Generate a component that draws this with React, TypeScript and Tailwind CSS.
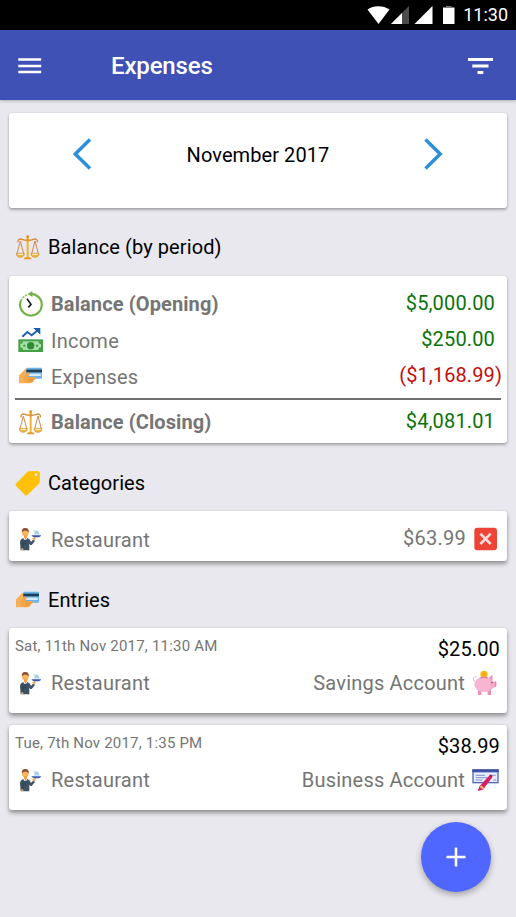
import type { ReactNode } from 'react';

function ScalesIcon() {
  return (
    <svg viewBox="0 0 78 78" className="h-[26px] w-[26px] shrink-0" fill="none">
      <path d="M16 21L6 59M16 21L26 59M60 21L50 59M60 21L70 59" stroke="#cf8a4e" strokeWidth="3" />
      <path d="M9 25C7 17 14 13 21 16C29 20 47 20 55 16C62 13 69 17 67 25" stroke="#d58a35" strokeWidth="4" />
      <path d="M4 58H28C28 66 23 70 16 70S4 66 4 58Z" fill="#f4b63c" stroke="#cf8a2e" strokeWidth="2" />
      <path d="M48 58H72C72 66 67 70 60 70S48 66 48 58Z" fill="#f4b63c" stroke="#cf8a2e" strokeWidth="2" />
      <path d="M8 61H24M52 61H68" stroke="#fff0c8" strokeWidth="4" />
      <path d="M38 8V72" stroke="#f6b22c" strokeWidth="6" />
      <circle cx="38" cy="8" r="4" fill="#dd8d1c" />
      <circle cx="38" cy="18" r="4.5" fill="#e2941f" />
      <path d="M27 74C27 70 32 70 38 70S49 70 49 74V76H27Z" fill="#e59a20" />
    </svg>
  );
}

function HistoryIcon() {
  return (
    <svg viewBox="0 0 78 78" className="h-[26px] w-[26px] shrink-0" fill="none">
      <path d="M34 9A32.500 32.500 0 1 1 9 28" stroke="#70b244" strokeWidth="6.500" />
      <path d="M9 30A32 32 0 0 1 27 11" stroke="#8cc665" strokeWidth="5" strokeDasharray="7 3" />
      <path d="M43 0L29 9L43 18Z" fill="#70b244" />
      <path d="M27 23L39 40L31 49" stroke="#1c1c1c" strokeWidth="5" />
    </svg>
  );
}

function IncomeIcon() {
  return (
    <svg viewBox="0 0 78 78" className="h-[26px] w-[26px] shrink-0" fill="none">
      <path d="M13 29L28 15L41 25L61 8" stroke="#2163ad" strokeWidth="6" />
      <path d="M46 3H67V23Z" fill="#1c5ba5" />
      <rect x="1" y="37" width="74" height="38" fill="#43a047" />
      <rect x="7" y="43" width="62" height="26" fill="#a5e0a4" />
      <path d="M7 43H15A8 8 0 0 1 7 51ZM69 43H61A8 8 0 0 0 69 51ZM7 69H15A8 8 0 0 0 7 61ZM69 69H61A8 8 0 0 1 69 61Z" fill="#43a047" />
      <circle cx="38" cy="56" r="11" fill="#2e8b3c" />
      <circle cx="19" cy="56" r="3.5" fill="#43a047" />
      <circle cx="57" cy="56" r="3.5" fill="#43a047" />
    </svg>
  );
}

function PaymentIcon() {
  return (
    <svg viewBox="0 0 78 78" className="h-[26px] w-[26px] shrink-0">
      <path d="M3 37L21 19C24 16 29 17 32 20L44 30L49 44L45 57L39 61H3Z" fill="#f6b158" />
      <rect x="25" y="14" width="47" height="33" rx="3" fill="#6db2e8" />
      <rect x="25" y="20" width="47" height="8" fill="#1f3d55" />
      <rect x="31" y="32" width="37" height="7" fill="#d7edfc" />
      <path d="M18 39L30 28L36 33L29 42H47C55 42 56 48 49 50L45 51C49 53 47 58 42 57L37 55C36 60 30 62 26 59L16 57Z" fill="#f3a548" />
      <path d="M32 48H50M30 54H44" stroke="#da8b36" strokeWidth="2" />
    </svg>
  );
}

function TagIcon() {
  return (
    <svg viewBox="0 0 78 78" className="h-[26px] w-[26px] shrink-0">
      <path
        d="M43 4L67 3C72 3 75 6 75 11L74 35C74 38 73 40 71 42L38 74C35 77 32 77 29 74L4 49C1 46 1 43 4 40L36 7C38 5 40 4 43 4ZM63 10A4 4 0 1 0 63 18A4 4 0 1 0 63 10Z"
        fill="#ffc107"
        fillRule="evenodd"
      />
    </svg>
  );
}

function WaiterIcon() {
  return (
    <svg viewBox="0 0 78 78" className="h-[26px] w-[26px] shrink-0">
      <path d="M6 49C6 42 10 38 17 36H28C34 38 37 43 39 48L46 40L51 45L41 57H37L34 53V73H8Z" fill="#3d5263" />
      <path d="M16 36L22 46L28 36Z" fill="#fff" />
      <path d="M22 40L24 43L23 58H21L20 43Z" fill="#27425b" />
      <path d="M15 47V72" stroke="#253746" strokeWidth="2" />
      <path d="M10 67H16V72H10Z" fill="#f3ae58" />
      <circle cx="22" cy="21" r="10" fill="#fbb45c" />
      <path d="M18 27H27V36L22 39L18 36Z" fill="#f2a34c" />
      <path d="M12 20C10 10 15 6 22 6C30 6 34 11 32 20C30 15 27 14 22 14C17 14 13 15 12 20Z" fill="#8a5238" />
      <path d="M42 37L52 33L54 38L48 44Z" fill="#f6ad55" />
      <path d="M40 28H70C67 33 63 34 56 34C48 34 43 33 40 28Z" fill="#3f56a8" />
      <path d="M48 26C48 19 52 15 56 15S64 19 65 26Z" fill="#b4dcf3" />
      <path d="M46 15H59M51 19H62" stroke="#8ab7da" strokeWidth="2" />
    </svg>
  );
}

function DeleteIcon() {
  return (
    <svg viewBox="0 0 78 78" className="h-[26px] w-[26px] shrink-0" fill="none">
      <rect x="4" y="5" width="68" height="68" rx="9" fill="#ee4438" />
      <path d="M22 23L53 54M53 23L22 54" stroke="#ffd9d6" strokeWidth="8" />
    </svg>
  );
}

function PiggyIcon() {
  return (
    <svg viewBox="0 0 78 78" className="h-[26px] w-[26px] shrink-0" fill="none">
      <circle cx="36" cy="13" r="11" fill="#fdb913" />
      <circle cx="36" cy="13" r="6" fill="#f9a616" />
      <path d="M9 35C2 31 3 20 13 20" stroke="#f29abd" strokeWidth="3" />
      <path d="M17 56H28V75H18ZM46 56H57V75H47Z" fill="#ee90b5" />
      <path d="M49 25L61 14L62 34Z" fill="#f190b6" />
      <ellipse cx="36" cy="43" rx="29" ry="23" fill="#f8b5d1" />
      <path d="M54 29L66 35H70C73 40 73 46 70 51L64 53L57 59Z" fill="#f5a8c9" />
      <rect x="68" y="34" width="5" height="16" rx="2" fill="#ee86ad" />
      <path d="M25 24C32 21 41 21 47 24" stroke="#ce6f98" strokeWidth="3" />
      <circle cx="60" cy="38" r="2" fill="#6a3350" />
    </svg>
  );
}

function ChequeIcon() {
  return (
    <svg viewBox="0 0 81 78" className="-mr-px h-[26px] w-[27px] shrink-0" fill="none">
      <rect x="3" y="9" width="75" height="38" fill="#e4ecfb" stroke="#5569b8" strokeWidth="4" />
      <rect x="1" y="7" width="79" height="9" fill="#3f51a5" />
      <path d="M11 25H39M11 32H46M11 39H31M56 25H71M64 39H73" stroke="#8390ce" strokeWidth="3" />
      <path d="M54 23L62 29L33 68L17 72L23 57Z" fill="#d81f60" />
      <path d="M27 55L38 63L33 68L23 60Z" fill="#f6b26b" />
      <path d="M54 24L60 28" stroke="#9c154c" strokeWidth="4" />
    </svg>
  );
}

function StatusBar() {
  return (
    <div className="flex h-[30px] items-center justify-end bg-black pr-[8px] text-white">
      <svg viewBox="0 0 96 24" className="mr-[2px] h-6 w-24" fill="#fff">
        <path d="M2.500 6.500C8 2 18.500 2 24.500 6.500L13.500 21Z" />
        <path d="M44 3V21H26Z" fill="#4c4c4c" />
        <path d="M37 10V21H26Z" />
        <path d="M67.500 3V21H49.500Z" />
        <path d="M78 4.500H89.500V21H78Z" />
        <path d="M81 3H86.500V4.500H81Z" fill="#777" />
      </svg>
      <span className="text-[18px] leading-[30px]">11:30</span>
    </div>
  );
}

function Toolbar() {
  return (
    <header className="relative z-10 flex h-[70px] items-center bg-[#3f51b5] pr-[23px] pl-[18px] text-white shadow-[0_1px_3px_rgba(0,0,0,0.25)]">
      <svg viewBox="0 0 24 16" className="-mb-[2px] h-4 w-6" fill="#fff">
        <path d="M.3 .3H23.200V2.800H.3ZM.3 6.700H23.200V9.200H.3ZM.3 12.800H23.200V15.300H.3Z" />
      </svg>
      <h1 className="mt-[2px] ml-[69px] text-[24px] leading-8 font-medium tracking-[-0.15px]">Expenses</h1>
      <svg viewBox="0 0 26 18" className="-mb-px ml-auto h-[18px] w-[26px]" fill="#fff">
        <path d="M1 1H26V4H1ZM5.300 7.500H21.500V10.500H5.300ZM10.500 14H16.300V17H10.500Z" />
      </svg>
    </header>
  );
}

function Card({ className, children }: { className: string; children: ReactNode }) {
  return (
    <div className={`rounded-[3px] bg-white ${className}`}>
      {children}
    </div>
  );
}

function SectionTitle({ className, icon, title }: { className: string; icon: ReactNode; title: string }) {
  return (
    <h2 className={`flex items-center gap-[7px] pl-[6px] tracking-[0.1px] text-black ${className}`}>
      {icon}
      {title}
    </h2>
  );
}

function Label({ icon, text, bold }: { icon: ReactNode; text: string; bold?: boolean }) {
  return (
    <div className="flex items-center gap-[7px] text-[#757575]">
      {icon}
      <span className={bold ? 'font-bold tracking-[0.1px]' : 'pt-px tracking-[0.25px]'}>{text}</span>
    </div>
  );
}

const entries = [
  { date: 'Sat, 11th Nov 2017, 11:30 AM', amount: '$25.00', account: 'Savings Account', icon: <PiggyIcon /> },
  { date: 'Tue, 7th Nov 2017, 1:35 PM', amount: '$38.99', account: 'Business Account', icon: <ChequeIcon /> },
];

export default function App() {
  return (
    <div className="relative h-[917px] w-[516px] overflow-hidden bg-[#e8e8ee] font-['Roboto',sans-serif] text-[20px] leading-[26px]">
      <StatusBar />
      <Toolbar />

      <main className="px-[9px] pt-[13px]">
        {/* Month picker */}
        <Card className="flex h-[95px] justify-between px-[64px] pt-[25px] shadow-[0_2px_3px_rgba(0,0,0,0.28),0_0_2px_rgba(0,0,0,0.14)]">
          <svg viewBox="0 0 20 32" className="h-8 w-5" fill="none">
            <path d="M17 1.500L2.300 16L17 30.500" stroke="#2b90dc" strokeWidth="3.500" />
          </svg>
          <span className="pt-[4px] tracking-[0.08px] text-black">November 2017</span>
          <svg viewBox="0 0 20 32" className="h-8 w-5" fill="none">
            <path d="M2.500 1.500L17.200 16L2.500 30.500" stroke="#2b90dc" strokeWidth="3.500" />
          </svg>
        </Card>

        {/* Balance */}
        <SectionTitle className="mt-[26px]" icon={<ScalesIcon />} title="Balance (by period)" />
        <Card className="mt-4 h-[167px] pt-[10px] shadow-[0_2px_3px_rgba(0,0,0,0.28),0_0_2px_rgba(0,0,0,0.14)]">
          <div className="flex h-9 items-center justify-between pr-3 pl-[9px]">
            <Label icon={<HistoryIcon />} text="Balance (Opening)" bold />
            <span className="-mt-[2px] tracking-[0.15px] text-[#0a730a]">$5,000.00</span>
          </div>
          <div className="flex h-9 items-center justify-between pr-3 pl-[9px]">
            <Label icon={<IncomeIcon />} text="Income" />
            <span className="-mt-[2px] tracking-[0.15px] text-[#0a730a]">$250.00</span>
          </div>
          <div className="flex h-9 items-center justify-between pr-[5px] pl-[9px]">
            <Label icon={<PaymentIcon />} text="Expenses" />
            <span className="-mt-[2px] tracking-[0.1px] text-[#c40d0d]">($1,168.99)</span>
          </div>
          <div className="mx-[6px] mt-1 h-[2px] bg-[#6f6f6f]" />
          <div className="mt-1 flex h-9 items-center justify-between pr-3 pl-[9px]">
            <Label icon={<ScalesIcon />} text="Balance (Closing)" bold />
            <span className="-mt-[2px] tracking-[0.15px] text-[#0a730a]">$4,081.01</span>
          </div>
        </Card>

        {/* Categories */}
        <SectionTitle className="mt-[27px]" icon={<TagIcon />} title="Categories" />
        <Card className="mt-[15px] flex h-[50px] items-center justify-between pt-[6px] pr-2 pl-[9px] shadow-[0_3px_4px_rgba(0,0,0,0.36),0_0_2px_rgba(0,0,0,0.12)]">
          <Label icon={<WaiterIcon />} text="Restaurant" />
          <div className="flex items-center gap-[7px] tracking-[0.25px] text-[#757575]">
            <span className="-mt-[2px]">$63.99</span>
            <DeleteIcon />
          </div>
        </Card>

        {/* Entries */}
        <SectionTitle className="mt-[26px]" icon={<PaymentIcon />} title="Entries" />
        <div className="mt-[15px] flex flex-col gap-[12.4px]">
          {entries.map((entry) => (
            <Card key={entry.date} className="h-[85px] pt-2 shadow-[0_3px_4px_rgba(0,0,0,0.36),0_0_2px_rgba(0,0,0,0.12)]">
              <div className="flex justify-between pr-[7px] pl-[6px]">
                <span className="text-[15px] leading-5 tracking-[0.2px] text-[#757575]">{entry.date}</span>
                <span className="tracking-[0.15px] text-black">{entry.amount}</span>
              </div>
              <div className="mt-[8px] flex items-center justify-between pr-[9px] pl-[9px]">
                <div className="-mt-px">
                  <Label icon={<WaiterIcon />} text="Restaurant" />
                </div>
                <div className="flex items-center gap-[7px] tracking-[0.2px] text-[#757575]">
                  {entry.account}
                  {entry.icon}
                </div>
              </div>
            </Card>
          ))}
        </div>
      </main>

      <button className="absolute top-[822px] left-[421px] flex h-[70px] w-[70px] items-center justify-center rounded-full bg-[#4f67ff] shadow-[0_3px_6px_rgba(0,0,0,0.3)]">
        <svg viewBox="0 0 20 20" className="h-5 w-5" fill="none">
          <path d="M10 .5V19.500M.5 10H19.500" stroke="#fff" strokeWidth="2.500" />
        </svg>
      </button>
    </div>
  );
}
